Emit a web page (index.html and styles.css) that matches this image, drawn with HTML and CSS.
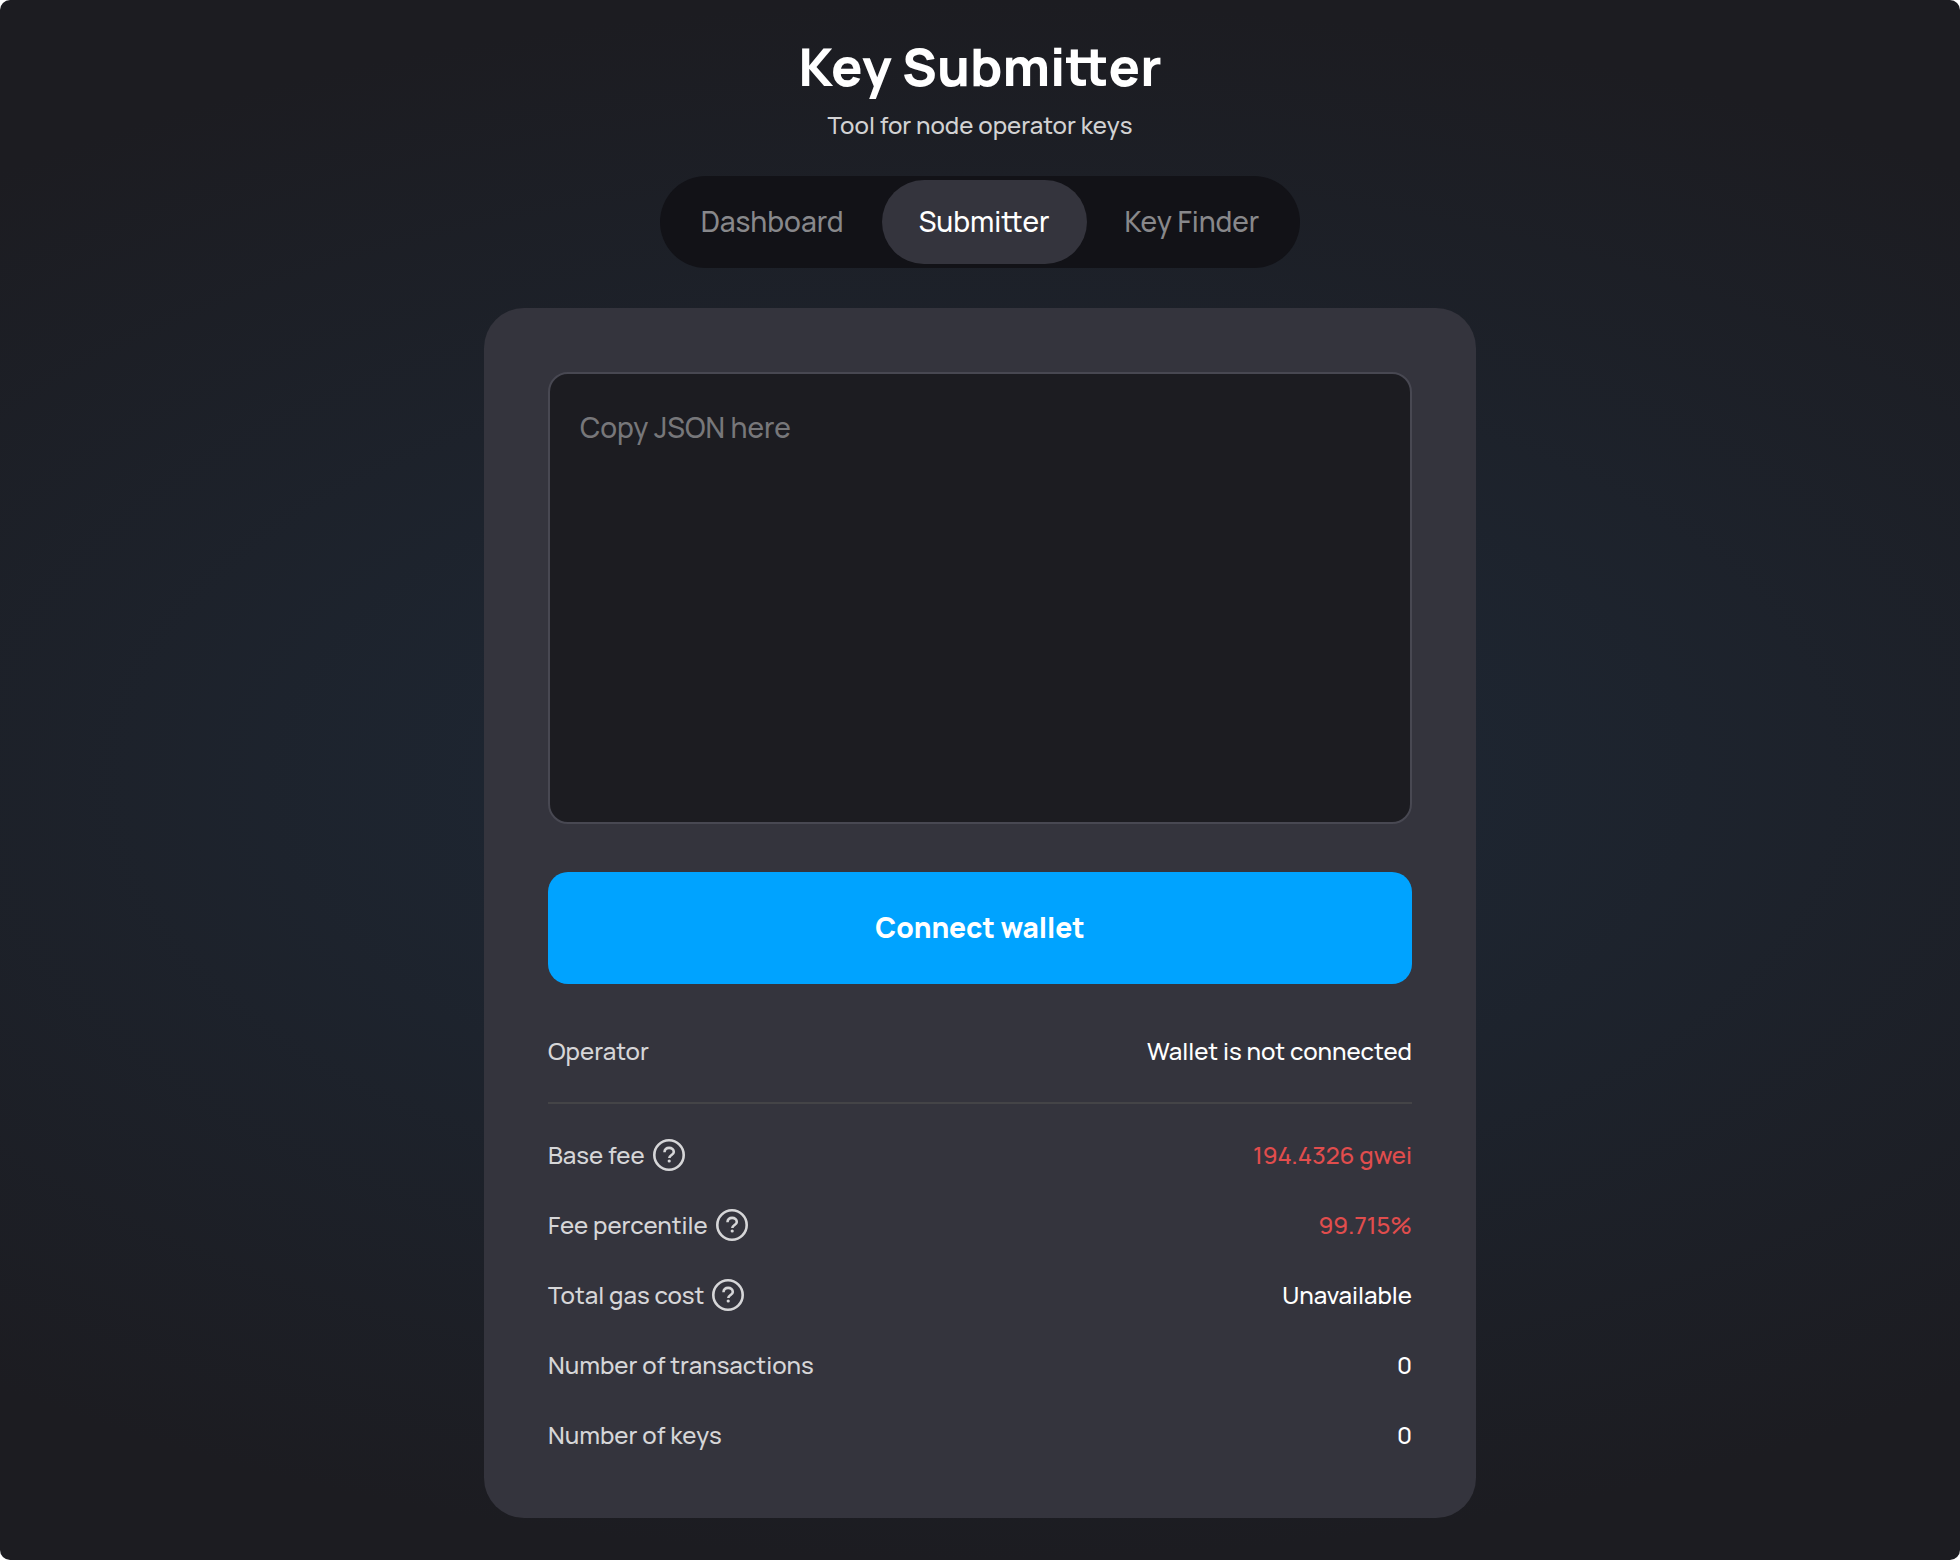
FILE: index.html
```html
<!DOCTYPE html>
<html lang="en">
<head>
<meta charset="utf-8">
<meta name="viewport" content="width=device-width, initial-scale=1">
<title>Key Submitter</title>
<link rel="stylesheet" href="styles.css">
</head>
<body>
<svg class="sprite" aria-hidden="true">
  <symbol id="help" viewBox="0 0 32 32">
    <circle cx="16" cy="16" r="14.7" fill="none" stroke="currentColor" stroke-width="2.6"/>
    <path d="M11.5 13.2C11.5 10.4 13.4 8.9 16.1 8.9s4.7 1.6 4.7 4c0 3-4.5 3.2-4.5 6.2" fill="none" stroke="currentColor" stroke-width="2.6"/>
    <circle cx="16.2" cy="22" r="1.6" fill="currentColor"/>
  </symbol>
</svg>
<div class="page">
  <header class="header">
    <h1 class="title">Key Submitter</h1>
    <p class="subtitle">Tool for node operator keys</p>
  </header>
  <nav class="tabs">
    <a class="tab" href="#dashboard">Dashboard</a>
    <a class="tab tab-active" href="#submitter" aria-current="page">Submitter</a>
    <a class="tab" href="#finder">Key Finder</a>
  </nav>
  <main class="card">
    <textarea class="json" aria-label="Keys JSON" placeholder="Copy JSON here"></textarea>
    <button class="connect" type="button">Connect wallet</button>
    <dl class="rows">
      <div class="row row-divided"><dt>Operator</dt><dd>Wallet is not connected</dd></div>
      <div class="row"><dt>Base fee <svg class="help"><use href="#help"/></svg></dt><dd class="high">194.4326 gwei</dd></div>
      <div class="row"><dt>Fee percentile <svg class="help"><use href="#help"/></svg></dt><dd class="high">99.715%</dd></div>
      <div class="row"><dt>Total gas cost <svg class="help"><use href="#help"/></svg></dt><dd>Unavailable</dd></div>
      <div class="row"><dt>Number of transactions</dt><dd>0</dd></div>
      <div class="row"><dt>Number of keys</dt><dd>0</dd></div>
    </dl>
  </main>
</div>
</body>
</html>
```

FILE: styles.css
```css
* {
  box-sizing: border-box;
  margin: 0;
  padding: 0;
}

body {
  background: #fff;
  color: #fff;
  font-family: Manrope, Inter, "Liberation Sans", sans-serif;
  font-size: 24px;
  font-weight: 500;
  line-height: 38px;
}

.sprite {
  display: none;
}

.page {
  display: flex;
  flex-direction: column;
  align-items: center;
  min-height: 100vh;
  padding: 36px 40px 42px;
  border-radius: 10px;
  background: radial-gradient(80% 50% at 50% 50%, #1e2937, #1c1c21);
}

.header {
  text-align: center;
}

.title {
  font-size: 52px;
  font-weight: 800;
  line-height: 62px;
}

.subtitle {
  margin-top: 8px;
  color: #d2d2d3;
}

.tabs {
  display: flex;
  gap: 1px;
  margin-top: 32px;
  padding: 4px;
  border-radius: 46px;
  background: #121217;
}

.tab {
  padding: 0 37px 2px;
  border-radius: 42px;
  color: #88888b;
  font-size: 28px;
  line-height: 82px;
  text-decoration: none;
}

.tab-active {
  background: #34343d;
  color: #fff;
}

.card {
  display: flex;
  flex-direction: column;
  width: 100%;
  max-width: 992px;
  margin-top: 40px;
  padding: 64px;
  border-radius: 40px;
  background: #34343d;
}

.json {
  width: 100%;
  height: 452px;
  padding: 34px 30px;
  border: 2px solid #484852;
  border-radius: 20px;
  background: #1c1c21;
  color: #fff;
  font: inherit;
  font-size: 28px;
  resize: none;
}

.json::placeholder {
  color: #77777a;
}

.connect {
  height: 112px;
  margin-top: 48px;
  padding-bottom: 2px;
  border: 0;
  border-radius: 20px;
  background: #00a3ff;
  color: #fff;
  font: inherit;
  font-size: 28px;
  font-weight: 800;
  cursor: pointer;
}

.rows {
  margin-top: 48px;
}

.row {
  display: flex;
  justify-content: space-between;
  margin-bottom: 32px;
}

.row:last-child {
  margin-bottom: 0;
}

.row-divided {
  padding-bottom: 32px;
  border-bottom: 2px solid #444447;
}

.row dt {
  display: flex;
  align-items: center;
  gap: 8px;
  color: #d6d6d8;
}

.high {
  color: #e14d4d;
}

.help {
  width: 32px;
  height: 32px;
}
```
